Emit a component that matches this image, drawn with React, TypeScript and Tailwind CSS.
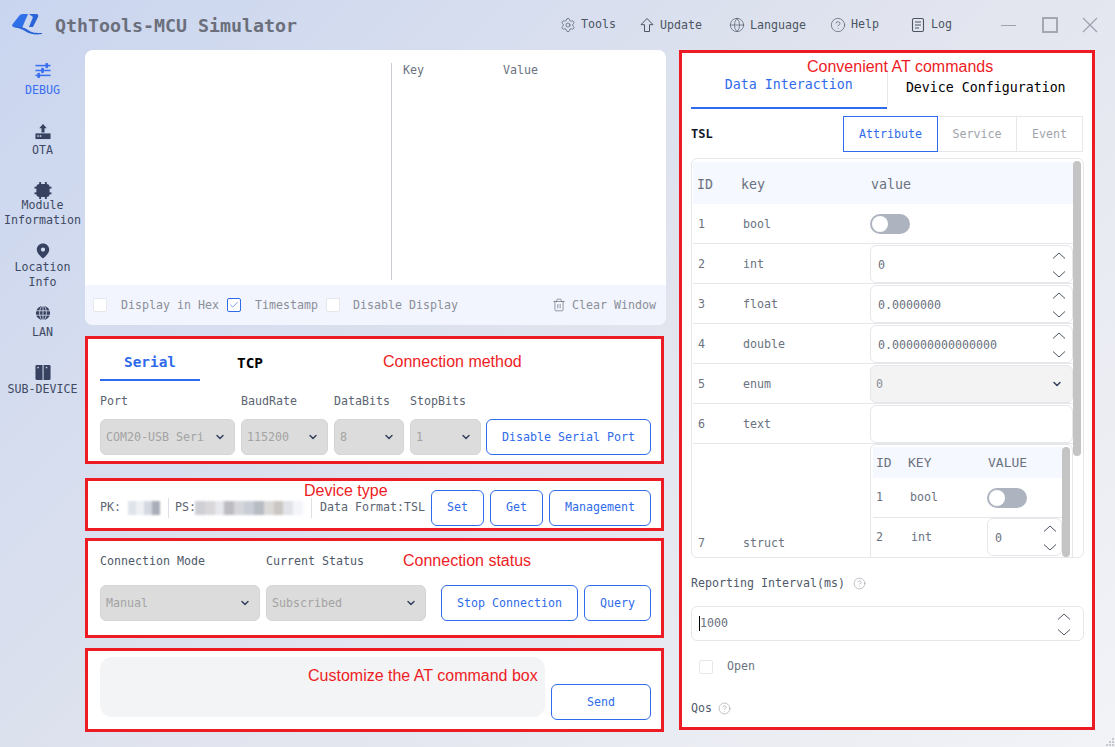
import React from "react";
import { ChevronDown, CircleHelp, Globe, Settings, Trash2, Check } from "lucide-react";

const redBox = "relative border-[3px] border-[#ed1c24] bg-white";
const note = "absolute font-['Liberation_Sans',sans-serif] text-[16px] leading-[20px] text-[#ed1c24] whitespace-nowrap";
const outlineBtn =
  "flex items-center justify-center h-[36px] rounded-md border border-[#2f6bea] bg-white text-[#2f6bea] shrink-0";
const selectBox =
  "flex items-center justify-between h-[36px] rounded-md border border-[#d5d5d5] bg-[#dcdcdc] pl-[5px] pr-[8px] text-[#a3a3a3] overflow-hidden whitespace-nowrap shrink-0";

const Logo = () => (
  <svg width="32" height="24" viewBox="0 0 32 24" fill="#2a62d8">
    <path d="M1 12L8 3Q9 1 12 1L17 1L11 15Q6 15 2 14Z" fill="#2f6fe8" />
    <path d="M18 1H25Q28 1 27 4L22 14L18 14L22 4Z" />
    <path d="M3 14C10 13 14 15 17 17C21 20 25 20 31 20L31 21C24 22 18 21 14 18C11 16 8 15 3 14Z" />
  </svg>
);

const DebugIcon = () => (
  <svg width="18" height="18" viewBox="0 0 18 18" fill="#3a6ff0">
    <rect x="1" y="3" width="16" height="1.6" />
    <rect x="1" y="8.2" width="16" height="1.6" />
    <rect x="1" y="13.4" width="16" height="1.6" />
    <rect x="11.5" y="1" width="3" height="5.6" rx="1.2" />
    <rect x="7" y="6.2" width="3" height="5.6" rx="1.2" />
    <rect x="3" y="11.4" width="3" height="5.6" rx="1.2" />
  </svg>
);

const OtaIcon = () => (
  <svg width="18" height="18" viewBox="0 0 18 18" fill="#374260">
    <path d="M9 1l4 4.5h-2.4V10H7.4V5.5H5z" />
    <path d="M1 11h16v6H1z" />
    <rect x="3" y="13" width="1.6" height="1.6" fill="#d3dbee" />
    <rect x="5.6" y="13" width="1.6" height="1.6" fill="#d3dbee" />
  </svg>
);

const ChipIcon = () => (
  <svg width="18" height="18" viewBox="0 0 18 18" fill="#374260">
    <rect x="2" y="2" width="14" height="14" rx="3.5" />
    <rect x="5" y="0" width="2" height="18" />
    <rect x="11" y="0" width="2" height="18" />
    <rect x="0" y="5" width="18" height="2" />
    <rect x="0" y="11" width="18" height="2" />
  </svg>
);

const PinIcon = () => (
  <svg width="18" height="18" viewBox="0 0 18 18">
    <path
      fillRule="evenodd"
      d="M9 0.5c3.9 0 7 3 7 6.8 0 4-4 7.6-7 10.2-3-2.6-7-6.2-7-10.2C2 3.5 5.1 0.5 9 0.5zM9 5a2.4 2.4 0 100 4.8A2.4 2.4 0 009 5z"
      fill="#374260"
    />
  </svg>
);

const LanIcon = () => (
  <svg width="18" height="18" viewBox="0 0 18 18">
    <circle cx="9" cy="9" r="8" fill="#374260" />
    <path d="M1 6.5h16M1 11.5h16M9 1v16" stroke="#d6dcec" strokeWidth="0.9" />
    <ellipse cx="9" cy="9" rx="3.8" ry="8" fill="none" stroke="#d6dcec" strokeWidth="0.9" />
  </svg>
);

const SubIcon = () => (
  <svg width="18" height="18" viewBox="0 0 18 18" fill="#374260">
    <path d="M1 2.5A1.5 1.5 0 012.5 1h6v16h-6A1.5 1.5 0 011 15.5z" />
    <path d="M9.6 1h5.9A1.5 1.5 0 0117 2.5v13a1.5 1.5 0 01-1.5 1.5H9.6z" />
    <rect x="3" y="3" width="1.5" height="1.5" fill="#d9deec" />
    <rect x="12" y="3" width="1.5" height="1.5" fill="#d9deec" />
  </svg>
);

const UpdateIcon = () => (
  <svg width="16" height="16" viewBox="0 0 16 16" fill="none" stroke="#4b5563" strokeWidth="1" strokeLinejoin="round">
    <path d="M8 1.5l6 6.2h-3.5v6.8h-5V7.7H2z" />
  </svg>
);

const LogIcon = () => (
  <svg width="16" height="16" viewBox="0 0 16 16" fill="none" stroke="#4b5563" strokeWidth="1.1">
    <rect x="2.5" y="1.5" width="11" height="13" rx="1.5" />
    <path d="M5 5h6M5 8h6M5 11h4" />
  </svg>
);

const navItems = [
  { icon: <DebugIcon />, lines: ["DEBUG"], box: "mt-[12px] h-[36px]", label: "mt-[4px] text-[#3a6ff0]" },
  { icon: <OtaIcon />, lines: ["OTA"], box: "mt-[25px] h-[35px]", label: "mt-[3px] text-[#3e4a63]" },
  { icon: <ChipIcon />, lines: ["Module", "Information"], box: "mt-[24px] h-[46px]", label: "mt-[-1px] text-[#3e4a63]" },
  { icon: <PinIcon />, lines: ["Location", "Info"], box: "mt-[15px] h-[47px]", label: "mt-[1px] text-[#3e4a63]" },
  { icon: <LanIcon />, lines: ["LAN"], box: "mt-[15px] h-[35px]", label: "mt-[4px] text-[#3e4a63]" },
  { icon: <SubIcon />, lines: ["SUB-DEVICE"], box: "mt-[24px] h-[33px]", label: "mt-[1px] text-[#3e4a63]" },
];

const toolItems = [
  { icon: <Settings size={16} strokeWidth={1} color="#4b5563" />, label: "Tools", box: "w-[79px]", text: "mt-[-1px]" },
  { icon: <UpdateIcon />, label: "Update", box: "w-[90px]", text: "mt-[1px]" },
  { icon: <Globe size={16} strokeWidth={1} color="#4b5563" />, label: "Language", box: "w-[101px]", text: "mt-[1px]" },
  { icon: <CircleHelp size={16} strokeWidth={1} color="#4b5563" />, label: "Help", box: "w-[80px]", text: "mt-[-1px]" },
  { icon: <LogIcon />, label: "Log", box: "w-[89px]", text: "mt-[-1px]" },
];

const Toggle = () => (
  <div className="flex items-center w-[40px] h-[20px] rounded-full bg-[#adb3bf] pl-[2px]">
    <div className="w-[16px] h-[16px] rounded-full bg-white" />
  </div>
);

const Chevron = ({ up = false }: { up?: boolean }) => (
  <svg width="14" height="7" viewBox="0 0 14 7" fill="none" stroke="#4b5563" strokeWidth="1">
    <path d={up ? "M1 6.5L7 1l6 5.5" : "M1 .5L7 6l6-5.5"} />
  </svg>
);

const Spin = () => (
  <div className="flex flex-col items-center justify-between h-full pt-[6px] pb-[4px]">
    <Chevron up />
    <Chevron />
  </div>
);

const NumberInput = ({ value }: { value: string }) => (
  <div className="flex items-center justify-between h-[38px] rounded-md border border-[#e5e7eb] bg-white pl-[7px] pr-[6px] text-[#6b7280]">
    <span className="mt-[3px]">{value}</span>
    <Spin />
  </div>
);

const Box = ({ on = false, className = "" }: { on?: boolean; className?: string }) => (
  <span
    className={
      on
        ? "flex items-center justify-center w-[14px] h-[14px] rounded-[2px] border border-[#2f6bea] bg-white shrink-0 " + className
        : "block w-[14px] h-[14px] rounded-[2px] border border-[#e5e7eb] bg-white shrink-0 " + className
    }
  >
    {on && <Check size={10} strokeWidth={1.5} color="#2f6bea" />}
  </span>
);

const Mosaic = ({ colors, className }: { colors: string[]; className: string }) => (
  <span className={"flex h-[14px] blur-[1px] " + className}>
    {colors.map((c, i) => (
      <span key={i} className="flex-1" style={{ backgroundColor: c }} />
    ))}
  </span>
);

const rows = [
  { id: "1", key: "bool", cell: <div className="flex items-center h-full"><Toggle /></div> },
  { id: "2", key: "int", cell: <NumberInput value="0" /> },
  { id: "3", key: "float", cell: <NumberInput value="0.0000000" /> },
  { id: "4", key: "double", cell: <NumberInput value="0.000000000000000" /> },
  {
    id: "5",
    key: "enum",
    cell: (
      <div className="flex items-center justify-between h-[38px] rounded-md border border-[#e5e7eb] bg-[#f3f3f3] pl-[5px] pr-[9px] text-[#8a8f98]">
        <span className="mt-[2px]">0</span>
        <ChevronDown size={12} strokeWidth={3} color="#374260" />
      </div>
    ),
  },
  { id: "6", key: "text", cell: <div className="h-[38px] rounded-md border border-[#e5e7eb] bg-white" /> },
];

const HelpDot = () => <CircleHelp size={13} strokeWidth={1} color="#8b8f96" />;

export default function App() {
  return (
    <div className="relative flex flex-col w-[1115px] h-[747px] overflow-hidden bg-[linear-gradient(135deg,#c9d5ef_0%,#e1e4ee_50%,#f2f3f7_100%)] font-['DejaVu_Sans_Mono',monospace] text-[11.63px] leading-[15px] text-[#4b5563]">
      {/* header */}
      <header className="flex items-center h-[50px] shrink-0">
        <div className="ml-[11px] mt-[-1px]">
          <Logo />
        </div>
        <div className="ml-[12px] text-[18.27px] font-bold text-[#6b6f7b]">QthTools-MCU Simulator</div>
        <div className="flex items-center ml-[263px]">
          {toolItems.map((t) => (
            <div key={t.label} className={"flex items-center gap-[5px] " + t.box}>
              {t.icon}
              <span className={t.text}>{t.label}</span>
            </div>
          ))}
        </div>
        <div className="flex items-center ml-[2px]">
          <div className="w-[15px] h-px bg-[#9ca3af]" />
          <div className="ml-[26px] w-[16px] h-[16px] border-2 border-[#a3a8b0]" />
          <svg className="ml-[24px]" width="16" height="16" viewBox="0 0 16 16" stroke="#9ca3af" strokeWidth="1.2">
            <path d="M1 1l14 14M15 1L1 15" />
          </svg>
        </div>
      </header>

      <div className="flex flex-1 min-h-0">
        {/* sidebar */}
        <nav className="flex flex-col w-[85px] shrink-0 items-center">
          {navItems.map((n) => (
            <div key={n.lines[0]} className={"flex flex-col items-center w-full " + n.box}>
              {n.icon}
              <div className={"text-center " + n.label}>
                {n.lines.map((l) => (
                  <div key={l}>{l}</div>
                ))}
              </div>
            </div>
          ))}
        </nav>

        {/* center column */}
        <main className="flex flex-col w-[581px] shrink-0">
          <section className="flex flex-col h-[275px] rounded-lg overflow-hidden bg-white">
            <div className="flex flex-1 pt-[13px]">
              <div className="w-[307px] h-[217px] border-r border-[#c9ccd2]" />
              <div className="flex pl-[11px] text-[#6b7280]">
                <span className="w-[100px]">Key</span>
                <span>Value</span>
              </div>
            </div>
            <div className="flex items-center h-[40px] bg-[#f2f5fe] pl-[8px] pr-[10px] text-[#8a8f98]">
              <Box />
              <span className="ml-[14px]">Display in Hex</span>
              <Box on className="ml-[8px]" />
              <span className="ml-[14px]">Timestamp</span>
              <Box className="ml-[8px]" />
              <span className="ml-[13px]">Disable Display</span>
              <Trash2 className="ml-auto" size={14} strokeWidth={1} color="#4b5563" />
              <span className="ml-[6px]">Clear Window</span>
            </div>
          </section>

          <section className={"mt-[11px] w-[579px] h-[128px] pl-[12px] " + redBox}>
            <div className="flex h-[42px] text-[14.4px]">
              <div className="flex items-center justify-center w-[100px] pt-[6px] border-b-2 border-[#2f6bea] font-bold text-[#2f6bea]">Serial</div>
              <div className="flex items-center justify-center w-[100px] pt-[6px] font-bold text-black">TCP</div>
            </div>
            <div className="grid grid-cols-[135px_87px_70px_71px] gap-x-[6px] mt-[13px] text-[#5b6472]">
              <span>Port</span>
              <span>BaudRate</span>
              <span>DataBits</span>
              <span>StopBits</span>
            </div>
            <div className="flex mt-[10px]">
              <div className="grid grid-cols-[135px_87px_70px_71px] gap-x-[6px]">
                <div className={selectBox}>
                  <span>COM20-USB Seri</span>
                  <ChevronDown className="shrink-0 ml-[4px]" size={12} strokeWidth={3} color="#374260" />
                </div>
                <div className={selectBox}>
                  <span>115200</span>
                  <ChevronDown size={12} strokeWidth={3} color="#374260" />
                </div>
                <div className={selectBox}>
                  <span>8</span>
                  <ChevronDown size={12} strokeWidth={3} color="#374260" />
                </div>
                <div className={selectBox}>
                  <span>1</span>
                  <ChevronDown size={12} strokeWidth={3} color="#374260" />
                </div>
              </div>
              <div className={"ml-[5px] w-[165px] " + outlineBtn}>Disable Serial Port</div>
            </div>
            <div className={note + " left-[295px] top-[13px]"}>Connection method</div>
          </section>

          <section className={"flex items-center mt-[14px] w-[579px] h-[53px] pl-[12px] pt-[6px] " + redBox}>
            <span className="text-[#5b6472]">PK:</span>
            <Mosaic className="w-[40px] ml-[-1px]" colors={["#ffffff", "#dfe3ea", "#eef0f4", "#d4d8e0", "#a8adb8"]} />
            <span className="ml-[8px] h-[20px] border-l border-[#dcdfe4]" />
            <span className="ml-[6px] text-[#5b6472]">PS:</span>
            <Mosaic
              className="w-[108px] ml-[-1px]"
              colors={["#cfd0d6", "#d9d7da", "#e6e8ed", "#bdbcc2", "#d5d5da", "#c9ced6", "#b8bcc3", "#dcd9d9", "#cbc7c4", "#e1e3e8", "#f3f5f8"]}
            />
            <span className="ml-[8px] h-[20px] border-l border-[#dcdfe4]" />
            <span className="ml-[8px] text-[#5b6472]">Data Format:TSL</span>
            <div className={"ml-[6px] w-[53px] " + outlineBtn}>Set</div>
            <div className={"ml-[6px] w-[53px] " + outlineBtn}>Get</div>
            <div className={"ml-[6px] w-[102px] " + outlineBtn}>Management</div>
            <div className={note + " left-[216px] top-[0px]"}>Device type</div>
          </section>

          <section className={"mt-[7px] w-[579px] h-[100px] pl-[12px] " + redBox}>
            <div className="flex mt-[13px] text-[#4f5968]">
              <span className="w-[166px]">Connection Mode</span>
              <span>Current Status</span>
            </div>
            <div className="flex mt-[16px]">
              <div className={"w-[160px] " + selectBox}>
                <span>Manual</span>
                <ChevronDown size={12} strokeWidth={3} color="#374260" />
              </div>
              <div className={"ml-[6px] w-[160px] " + selectBox}>
                <span>Subscribed</span>
                <ChevronDown size={12} strokeWidth={3} color="#374260" />
              </div>
              <div className={"ml-[15px] w-[137px] " + outlineBtn}>Stop Connection</div>
              <div className={"ml-[6px] w-[67px] " + outlineBtn}>Query</div>
            </div>
            <div className={note + " left-[315px] top-[10px]"}>Connection status</div>
          </section>

          <section className={"flex items-start mt-[10px] w-[579px] h-[84px] pl-[12px] pt-[6px] " + redBox}>
            <div className="w-[445px] h-[60px] shrink-0 rounded-xl bg-[#f3f4f6]" />
            <div className={"ml-[6px] mt-[27px] w-[100px] " + outlineBtn}>Send</div>
            <div className={note + " left-[220px] top-[15px]"}>Customize the AT command box</div>
          </section>
        </main>

        {/* right column */}
        <aside className={"ml-[13px] w-[416px] h-[680px] pl-[9px] pr-[8px] shrink-0 " + redBox}>
          <div className="flex h-[56px] text-[13.28px]">
            <div className="flex items-center justify-center w-[197px] border-b-2 border-[#2f6bea] pt-[9px] text-[#2f6bea]">Data Interaction</div>
            <div className="flex items-center justify-center w-[199px] h-[35px] mt-[17px] border-l border-[#e5e7eb] text-black">Device Configuration</div>
            <div className={note + " left-[125px] top-[4px]"}>Convenient AT commands</div>
          </div>

          <div className="flex items-center h-[36px] mt-[7px]">
            <span className="font-bold text-[12px] text-[#111827]">TSL</span>
            <div className="flex h-full ml-auto mr-[1px] text-[#a0a4ab]">
              <div className="flex items-center justify-center w-[95px] border border-[#2f6bea] text-[#2f6bea]">Attribute</div>
              <div className="flex items-center justify-center w-[79px] border-y border-r border-[#e5e7eb]">Service</div>
              <div className="flex items-center justify-center w-[66px] border-y border-r border-[#e5e7eb]">Event</div>
            </div>
          </div>

          <div className="relative mt-[6px] w-[393px] h-[400px] rounded-md border border-[#e5e7eb] overflow-hidden pt-[3px] pl-[1px]">
            <div className="flex items-center h-[42px] w-[380px] bg-[#f5f8fe] text-[13.28px] text-[#6b7280]">
              <span className="w-[48px] pl-[4px] mt-[2px]">ID</span>
              <span className="w-[130px] mt-[2px]">key</span>
              <span className="mt-[2px]">value</span>
            </div>
            {rows.map((r) => (
              <div key={r.id} className="flex items-center h-[40px] w-[380px] border-b border-[#e5e7eb] text-[#6b7280]">
                <span className="w-[50px] pl-[5px] mt-[2px]">{r.id}</span>
                <span className="w-[127px] mt-[2px]">{r.key}</span>
                <div className="flex-1 h-[38px]">{r.cell}</div>
              </div>
            ))}
            <div className="flex w-[380px] h-[120px] text-[#6b7280]">
              <span className="w-[50px] pl-[5px] pt-[92px]">7</span>
              <span className="w-[127px] pt-[92px]">struct</span>
              <div className="relative flex-1 rounded-md border border-[#e5e7eb] pl-[2px] pt-[2px]">
                <div className="flex items-center h-[31px] w-[189px] bg-[#f5f8fe] text-[13px] text-[#6b7280]">
                  <span className="w-[35px] pl-[3px]">ID</span>
                  <span className="w-[80px]">KEY</span>
                  <span>VALUE</span>
                </div>
                <div className="flex items-center h-[40px] w-[189px] border-b border-[#e5e7eb]">
                  <span className="w-[37px] pl-[3px]">1</span>
                  <span className="w-[77px]">bool</span>
                  <Toggle />
                </div>
                <div className="flex items-start h-[40px] w-[189px]">
                  <span className="w-[38px] pl-[3px] pt-[12px]">2</span>
                  <span className="w-[76px] pt-[12px]">int</span>
                  <div className="flex items-center justify-between flex-1 h-[38px] rounded-md border border-[#e5e7eb] pl-[7px] pr-[4px]">
                    <span className="mt-[3px]">0</span>
                    <Spin />
                  </div>
                </div>
                <div className="absolute left-[191px] top-[2px] w-[8px] h-[110px] rounded-full bg-[#c4c4c4]" />
              </div>
            </div>
            <div className="absolute left-[381px] top-[2px] w-[8px] h-[295px] rounded-full bg-[#c4c4c4]" />
          </div>

          <div className="flex items-center gap-[8px] mt-[18px] text-[#4f5968]">
            <span>Reporting Interval(ms)</span>
            <HelpDot />
          </div>
          <div className="flex items-center justify-between mt-[15px] w-[393px] h-[35px] rounded-md border border-[#e5e7eb] pl-[7px] pr-[12px] text-[#6b7280]">
            <span className="border-l border-black">1000</span>
            <Spin />
          </div>
          <div className="flex items-center mt-[18px] ml-[8px] text-[#6b7280]">
            <Box />
            <span className="ml-[14px]">Open</span>
          </div>
          <div className="flex items-center gap-[6px] mt-[27px] text-[#4f5968]">
            <span>Qos</span>
            <HelpDot />
          </div>
        </aside>
      </div>

      {/* resize grip */}
      <svg className="absolute right-0 bottom-0" width="10" height="10" viewBox="0 0 10 10" fill="#c4c7cf">
        <rect x="7" y="1" width="2" height="2" />
        <rect x="4" y="4" width="2" height="2" />
        <rect x="7" y="4" width="2" height="2" />
        <rect x="1" y="7" width="2" height="2" />
        <rect x="4" y="7" width="2" height="2" />
        <rect x="7" y="7" width="2" height="2" />
      </svg>
    </div>
  );
}
